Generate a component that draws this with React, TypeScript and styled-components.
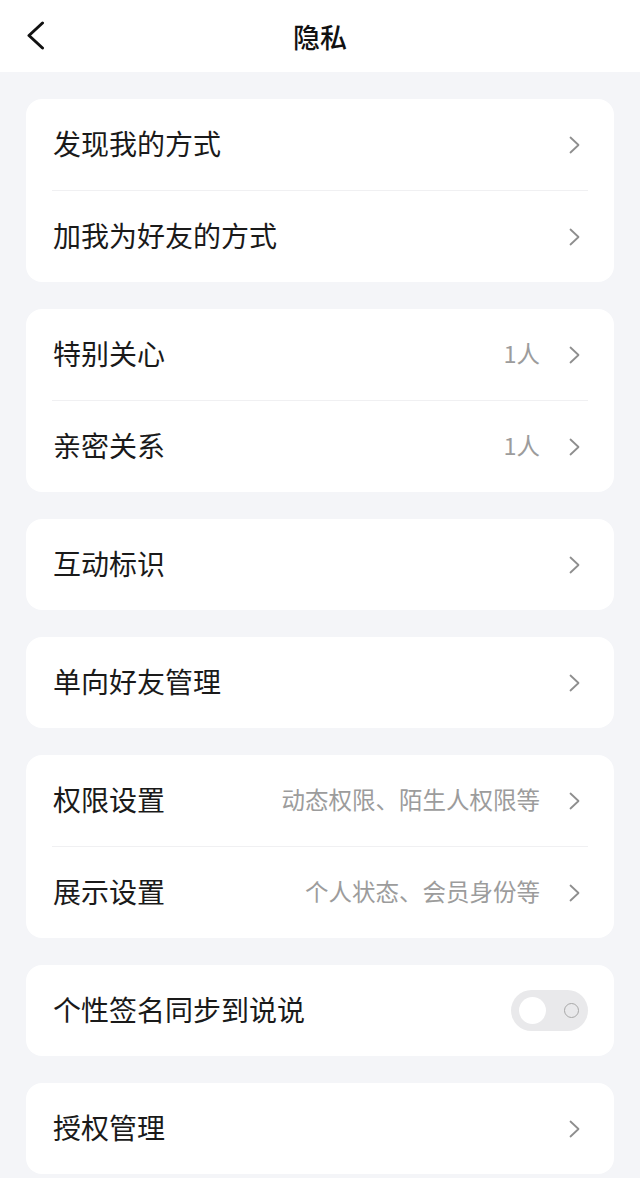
import React from "react";
import styled, { createGlobalStyle } from "styled-components";

const GlobalStyle = createGlobalStyle`
  html, body {
    margin: 0;
    padding: 0;
    background: #f4f5f8;
    font-family: "Noto Sans CJK SC", "Noto Sans", sans-serif;
    -webkit-font-smoothing: antialiased;
  }
  * { box-sizing: border-box; }
`;

const Page = styled.div`
  width: 640px;
  min-height: 1178px;
  background: #f4f5f8;
`;

const Header = styled.header`
  height: 72px;
  background: #ffffff;
  display: grid;
  grid-template-columns: 1fr auto 1fr;
  align-items: center;
`;

const BackButton = styled.div`
  padding-left: 26px;
  display: flex;
  align-items: center;
  height: 100%;
`;

const Title = styled.h1`
  margin: 0;
  font-size: 27px;
  font-weight: 500;
  color: #111;
  line-height: 1;
  letter-spacing: 0;
`;

const Content = styled.main`
  padding: 27px 26px 0;
  display: flex;
  flex-direction: column;
  gap: 27px;
`;

const Card = styled.section`
  background: #ffffff;
  border-radius: 16px;
  display: flex;
  flex-direction: column;
`;

const Row = styled.div`
  height: 91px;
  display: flex;
  align-items: center;
  padding: 0 34px 0 27px;
`;

const Divider = styled.div`
  height: 1px;
  margin: 0 26px;
  background: #f0f0f2;
`;

const Label = styled.span`
  flex: 1;
  font-size: 28px;
  color: #1a1a1a;
  line-height: 1;
  margin-top: -3px;
`;

const Value = styled.span`
  font-size: 23.5px;
  color: #9c9c9c;
  line-height: 1;
  margin-right: 29px;
  margin-top: -2px;
`;

const Toggle = styled.div`
  width: 77px;
  height: 41px;
  border-radius: 21px;
  background: #e9e9eb;
  margin-right: -8px;
  display: flex;
  align-items: center;
  justify-content: space-between;
  padding: 0 9px 0 8px;
`;

const Knob = styled.div`
  width: 27px;
  height: 27px;
  border-radius: 50%;
  background: #ffffff;
`;

const Ring = styled.div`
  width: 15px;
  height: 15px;
  border-radius: 50%;
  border: 1.5px solid #a8a8a8;
`;

const Chevron = () => (
  <svg width="11" height="18" viewBox="0 0 11 18" fill="none">
    <polyline
      points="1.5,1.5 9.5,9 1.5,16.5"
      stroke="#8e8e8e"
      strokeWidth="1.8"
      strokeLinecap="round"
      strokeLinejoin="round"
    />
  </svg>
);

const BackIcon = () => (
  <svg width="19" height="30" viewBox="0 0 19 30" fill="none">
    <polyline
      points="16.5,2 3,14.5 16.5,27"
      stroke="#111"
      strokeWidth="3"
      strokeLinecap="round"
      strokeLinejoin="round"
    />
  </svg>
);

type Item = { label: string; value?: string; toggle?: boolean };

const groups: Item[][] = [
  [{ label: "发现我的方式" }, { label: "加我为好友的方式" }],
  [
    { label: "特别关心", value: "1人" },
    { label: "亲密关系", value: "1人" },
  ],
  [{ label: "互动标识" }],
  [{ label: "单向好友管理" }],
  [
    { label: "权限设置", value: "动态权限、陌生人权限等" },
    { label: "展示设置", value: "个人状态、会员身份等" },
  ],
  [{ label: "个性签名同步到说说", toggle: true }],
  [{ label: "授权管理" }],
];

export default function App() {
  return (
    <Page>
      <GlobalStyle />
      <Header>
        <BackButton>
          <BackIcon />
        </BackButton>
        <Title>隐私</Title>
        <div />
      </Header>
      <Content>
        {groups.map((group, gi) => (
          <Card key={gi}>
            {group.map((item, i) => (
              <React.Fragment key={item.label}>
                {i > 0 && <Divider />}
                <Row>
                  <Label>{item.label}</Label>
                  {item.value && <Value>{item.value}</Value>}
                  {item.toggle ? (
                    <Toggle>
                      <Knob />
                      <Ring />
                    </Toggle>
                  ) : (
                    <Chevron />
                  )}
                </Row>
              </React.Fragment>
            ))}
          </Card>
        ))}
      </Content>
    </Page>
  );
}
